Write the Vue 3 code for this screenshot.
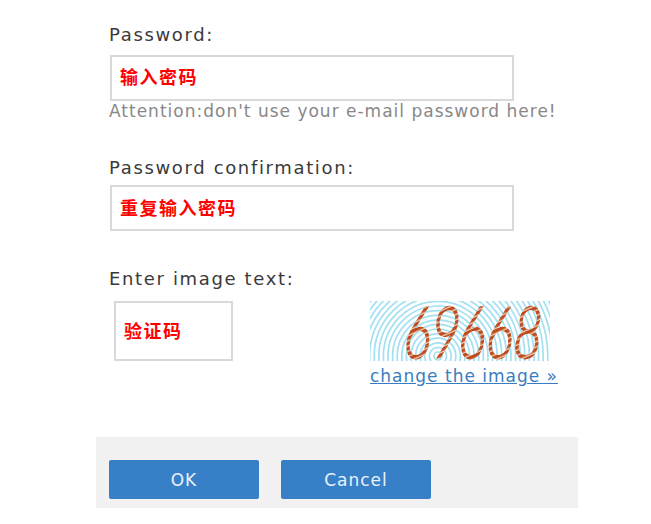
<script setup>
const rings = Array.from({ length: 40 }, (_, i) => 4 + i * 4.6)
</script>

<template>
  <form class="form" @submit.prevent>
    <div class="fields">
      <label class="label">Password:</label>
      <div class="input wide first-input">输入密码</div>
      <div class="hint">Attention:don't use your e-mail password here!</div>

      <label class="label second">Password confirmation:</label>
      <div class="input wide second-input">重复输入密码</div>

      <label class="label third">Enter image text:</label>
      <div class="captcha-row">
        <div class="input small">验证码</div>
        <div class="captcha">
          <svg class="captcha-img" width="180" height="60" viewBox="0 0 180 60">
            <defs>
              <pattern id="stripes" width="6" height="5" patternUnits="userSpaceOnUse" patternTransform="rotate(-25)">
                <rect width="6" height="5" fill="#bf4a20" />
                <rect y="3.6" width="6" height="1.4" fill="#ecd2b4" />
              </pattern>
            </defs>
            <rect width="180" height="60" fill="#fff" />
            <circle v-for="r in rings" :key="r" cx="68" cy="55" :r="r" fill="none" stroke="#a2e0f2" stroke-width="1.7" />
            <text class="digits" x="39" y="57" textLength="137" lengthAdjust="spacingAndGlyphs" transform="skewX(-7)" fill="url(#stripes)" stroke="url(#stripes)" stroke-width="1.6">69668</text>
          </svg>
          <a class="change" href="#">change the image »</a>
        </div>
      </div>
    </div>

    <div class="footer">
      <button class="btn" type="button">OK</button>
      <button class="btn" type="button">Cancel</button>
    </div>
  </form>
</template>

<style scoped>
.form {
  width: 482px;
  margin-left: 96px;
  font-family: "DejaVu Sans", Verdana, sans-serif;
  font-size: 18px;
  letter-spacing: 1.65px;
  color: #3a3a3a;
}

.fields {
  padding: 25px 0 0 13px;
}

.label {
  display: block;
  line-height: 20px;
  height: 20px;
}

.second {
  margin-top: 37px;
}

.third {
  margin-top: 38px;
}

.input {
  box-sizing: border-box;
  border: 2px solid #d9d9d9;
  background: #fff;
  color: #f00;
  font-family: "Noto Sans CJK SC", sans-serif;
  font-size: 18px;
  letter-spacing: 1.5px;
  font-weight: 700;
  display: flex;
  align-items: center;
  padding-bottom: 2px;
}

.wide {
  width: 404px;
  height: 46px;
  margin-left: 1px;
  padding-left: 8px;
}

.first-input {
  margin-top: 10px;
  padding-bottom: 5px;
}

.second-input {
  margin-top: 7px;
}

.small {
  width: 119px;
  height: 60px;
  padding-left: 8px;
  margin-left: 5px;
}

.hint {
  color: #888;
  font-size: 17px;
  letter-spacing: 1px;
  line-height: 20px;
  height: 20px;
}

.captcha-row {
  display: flex;
  margin-top: 12px;
}

.captcha {
  margin-left: 137px;
}

.captcha-img {
  display: block;
}

.digits {
  font-family: "Lato", "Liberation Sans", sans-serif;
  font-size: 72px;
  font-weight: 300;
  letter-spacing: 0;
}

.change {
  display: block;
  color: #3a7cbf;
  font-size: 17px;
  letter-spacing: 1px;
  line-height: 18px;
  margin-top: 6px;
  white-space: nowrap;
}

.footer {
  display: flex;
  gap: 22px;
  margin-top: 52px;
  background: #f1f1f1;
  height: 71px;
  padding: 23px 0 0 13px;
  box-sizing: border-box;
}

.btn {
  width: 150px;
  height: 39px;
  border: none;
  border-radius: 2px;
  background: #3780c8;
  color: #e8f1fa;
  font-family: "DejaVu Sans", Verdana, sans-serif;
  font-size: 17px;
  letter-spacing: 1px;
  padding: 0;
}
</style>

<style>
body {
  background: #fff;
}
</style>
